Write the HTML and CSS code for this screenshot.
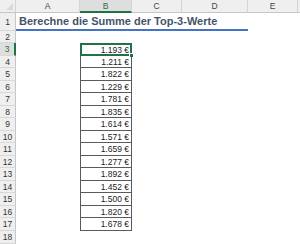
FILE: index.html
```html
<!DOCTYPE html>
<html lang="de">
<head>
  <meta charset="UTF-8">
  <title>Top-3-Werte</title>
  <link rel="stylesheet" href="styles.css">
</head>
<body>
  <div class="sheet">
    <!-- column headers -->
    <div class="corner"><span class="tri"></span></div>
    <div class="col-head">A</div>
    <div class="col-head active">B</div>
    <div class="col-head">C</div>
    <div class="col-head">D</div>
    <div class="col-head">E</div>
    <div class="col-head end"></div>

    <!-- row 1 -->
    <div class="row-head r-title">1</div>
    <div class="title">Berechne die Summe der Top-3-Werte</div>
    <div class="blank r-title"></div>

    <!-- row 2 -->
    <div class="row-head">2</div>
    <div class="blank wide"></div>

    <div class="row-head active">3</div>
    <div class="gap-a"></div>
    <div class="cell first selected">1.193 €<span class="handle"></span></div>
    <div class="gap-rest"></div>

    <div class="row-head">4</div><div class="gap-a"></div><div class="cell">1.211 €</div><div class="gap-rest"></div>
    <div class="row-head">5</div><div class="gap-a"></div><div class="cell">1.822 €</div><div class="gap-rest"></div>
    <div class="row-head">6</div><div class="gap-a"></div><div class="cell">1.229 €</div><div class="gap-rest"></div>
    <div class="row-head">7</div><div class="gap-a"></div><div class="cell">1.781 €</div><div class="gap-rest"></div>
    <div class="row-head">8</div><div class="gap-a"></div><div class="cell">1.835 €</div><div class="gap-rest"></div>
    <div class="row-head">9</div><div class="gap-a"></div><div class="cell">1.614 €</div><div class="gap-rest"></div>
    <div class="row-head">10</div><div class="gap-a"></div><div class="cell">1.571 €</div><div class="gap-rest"></div>
    <div class="row-head">11</div><div class="gap-a"></div><div class="cell">1.659 €</div><div class="gap-rest"></div>
    <div class="row-head">12</div><div class="gap-a"></div><div class="cell">1.277 €</div><div class="gap-rest"></div>
    <div class="row-head">13</div><div class="gap-a"></div><div class="cell">1.892 €</div><div class="gap-rest"></div>
    <div class="row-head">14</div><div class="gap-a"></div><div class="cell">1.452 €</div><div class="gap-rest"></div>
    <div class="row-head">15</div><div class="gap-a"></div><div class="cell">1.500 €</div><div class="gap-rest"></div>
    <div class="row-head">16</div><div class="gap-a"></div><div class="cell">1.820 €</div><div class="gap-rest"></div>
    <div class="row-head">17</div><div class="gap-a"></div><div class="cell">1.678 €</div><div class="gap-rest"></div>

    <div class="row-head">18</div>
    <div class="blank wide"></div>
  </div>
</body>
</html>
```

FILE: styles.css
```css
body {
  margin: 0;
  background-color: #ffffff;
  font-family: "Liberation Sans", Arial, sans-serif;
  overflow: hidden;
}

.sheet {
  display: grid;
  grid-template-columns: 16px 64px 52px 50px 66px 50px 2px;
  grid-template-rows: 13px 18px 12px repeat(7, 13px 12px) 13px 13px;
  width: 300px;
  height: 244px;
}

.sheet div {
  box-sizing: border-box;
}

/* headers */
.corner {
  position: relative;
  background-color: #efefef;
  border-right: 1px solid #d4d4d4;
  border-bottom: 1px solid #c6c6c6;
}
.corner .tri {
  position: absolute;
  right: 2px;
  bottom: 2px;
  width: 0;
  height: 0;
  border-left: 7px solid transparent;
  border-bottom: 7px solid #dadada;
}

.col-head {
  background-color: #efefef;
  border-right: 1px solid #d4d4d4;
  border-bottom: 1px solid #c6c6c6;
  color: #444444;
  font-size: 8.5px;
  line-height: 12px;
  text-align: center;
}
.col-head.end {
  border-right: none;
}
.col-head.active {
  background-color: #dedede;
  color: #217346;
  border-bottom: 2px solid #217346;
}

.row-head {
  grid-column: 1;
  background-color: #efefef;
  border-right: 1px solid #c6c6c6;
  border-bottom: 1px solid #d8d8d8;
  color: #333333;
  font-size: 8.5px;
  display: flex;
  align-items: center;
  justify-content: center;
}
.row-head.active {
  background-color: #dedede;
  color: #217346;
  border-right: 2px solid #217346;
}

/* title row */
.title {
  grid-column: 2 / 6;
  border-bottom: 2px solid #4472c4;
  color: #44546a;
  font-weight: bold;
  font-size: 11px;
  line-height: 17px;
  padding-left: 3px;
  white-space: nowrap;
}
.blank.r-title {
  grid-column: 6 / 8;
}
.blank.wide {
  grid-column: 2 / 8;
}

.gap-a {
  grid-column: 2;
}
.gap-rest {
  grid-column: 4 / 8;
}

/* data cells */
.cell {
  position: relative;
  grid-column: 3;
  border-left: 1px solid #5a5a5a;
  border-right: 1px solid #5a5a5a;
  border-bottom: 1px solid #5a5a5a;
  color: #222222;
  font-size: 8.5px;
  text-align: right;
  padding-right: 2px;
  display: flex;
  align-items: center;
  justify-content: flex-end;
}
.cell.first {
  border-top: 1px solid #5a5a5a;
}
.cell.selected {
  border: 2px solid #217346;
  padding-right: 1px;
}
.cell .handle {
  position: absolute;
  right: -4px;
  bottom: -4px;
  width: 5px;
  height: 5px;
  background-color: #217346;
  border: 1px solid #ffffff;
  box-sizing: border-box;
}
```
